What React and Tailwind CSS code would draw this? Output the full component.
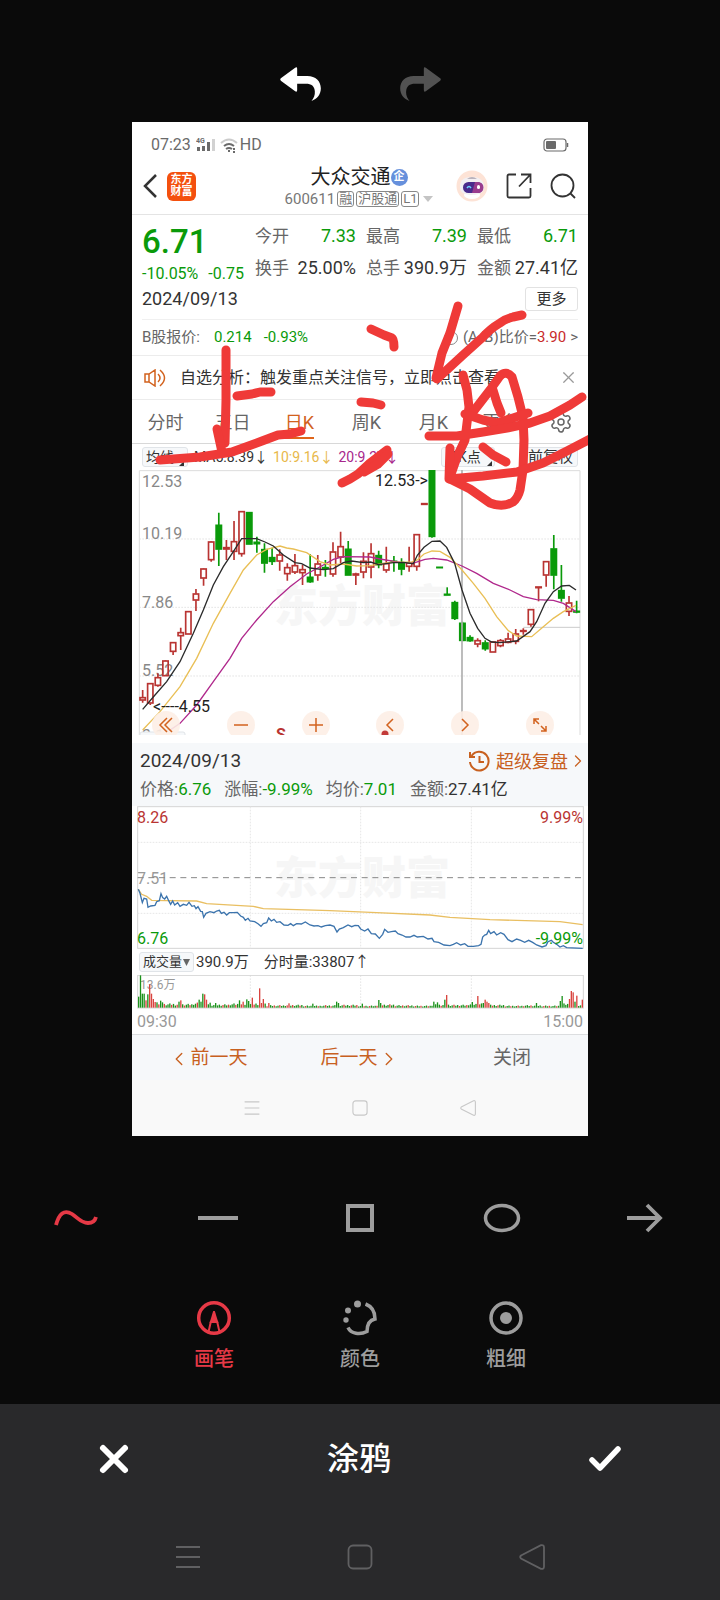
import React from 'react';
import { ChevronLeft, ChevronRight, Settings, X } from 'lucide-react';

const GREEN = '#0a9a0a';
const RED = '#b93432';

// [high, body top, body bottom, low, rising]
const candles = [
  [690, 712, 721, 728, 1], [670, 670, 730, 735, 1], [640, 652, 677, 680, 1], [600, 602, 648, 648, 1],
  [547, 547, 575, 585, 1], [503, 517, 528, 570, 1], [454, 454, 523, 523, 1], [387, 401, 421, 453, 1],
  [325, 326, 355, 377, 1], [244, 245, 300, 305, 1], [158, 195, 268, 318, 0], [240, 262, 268, 300, 1],
  [183, 244, 275, 300, 1], [154, 154, 282, 290, 1], [157, 157, 253, 253, 0], [230, 246, 252, 278, 0],
  [250, 268, 310, 338, 0], [263, 292, 305, 315, 0], [268, 284, 304, 332, 1], [310, 322, 342, 362, 1],
  [282, 316, 337, 342, 1], [315, 328, 339, 375, 1], [282, 351, 366, 368, 0], [285, 311, 346, 362, 1],
  [300, 322, 326, 350, 0], [247, 275, 343, 350, 1], [215, 259, 292, 310, 1], [243, 267, 346, 346, 0],
  [338, 341, 346, 375, 1], [277, 303, 337, 355, 1], [250, 280, 322, 355, 1], [272, 286, 315, 325, 0],
  [260, 310, 331, 338, 1], [288, 303, 307, 335, 0], [295, 310, 328, 346, 0], [260, 308, 320, 335, 1],
  [222, 223, 320, 332, 1], [130, 130, 134, 134, 1], [30, 30, 230, 233, 0], [321, 321, 324, 324, 0],
  [382, 402, 406, 406, 0], [422, 427, 476, 480, 0], [485, 489, 542, 544, 0], [526, 532, 543, 545, 0],
  [535, 541, 553, 562, 1], [541, 548, 567, 572, 0], [545, 545, 577, 577, 1], [537, 541, 558, 562, 1],
  [518, 536, 548, 550, 1], [507, 521, 545, 553, 1], [505, 511, 515, 524, 1], [448, 448, 494, 500, 1],
  [380, 380, 384, 424, 1], [303, 304, 346, 380, 1], [225, 266, 346, 388, 0], [315, 391, 415, 425, 0],
  [408, 428, 455, 468, 1], [422, 453, 457, 460, 0],
];

const ma5 =
  '38,748 75,705 110,665 150,605 190,520 220,450 250,375 280,320 310,275 335,236 380,236 405,246 430,258 460,285 495,308 515,311 540,324 580,329 610,326 640,308 665,303 700,308 722,306 745,314 790,308 820,307 850,311 862,286 882,262 906,244 930,243 950,262 974,310 996,390 1020,460 1043,505 1065,535 1085,546 1110,548 1160,543 1200,515 1220,485 1245,430 1270,395 1295,378 1318,376 1338,390';
const ma10 =
  '38,810 90,755 150,680 200,595 250,490 300,400 340,330 380,285 410,268 450,258 470,264 490,267 530,278 570,305 600,315 640,312 680,318 720,317 780,307 845,306 862,300 882,282 906,273 930,274 960,292 996,330 1030,370 1065,415 1100,470 1135,512 1160,528 1205,530 1240,500 1270,475 1300,455 1338,436';
const ma20 =
  '118,812 150,790 200,735 250,665 300,595 335,535 380,480 430,425 480,380 530,342 580,315 610,298 640,290 720,291 750,297 810,307 855,308 885,298 910,295 950,300 996,318 1040,340 1090,370 1140,390 1180,410 1220,419 1270,421 1300,430 1338,455';

const priceLine =
  '25,463 30,475 37,503 42,490 50,492 54,517 62,513 75,511 80,500 88,497 93,476 98,488 104,492 110,484 116,497 122,508 128,498 134,510 143,503 150,514 160,508 170,511 177,502 186,514 193,512 198,521 204,515 212,529 217,530 221,547 228,535 240,530 252,533 260,528 268,526 274,535 282,532 290,540 298,533 310,533 322,532 332,543 340,547 346,556 354,550 360,558 374,560 384,566 393,574 400,566 410,563 416,549 424,558 432,553 440,562 450,560 462,570 474,571 482,566 490,572 500,566 514,567 526,561 540,570 552,573 564,572 574,576 586,572 600,570 612,574 621,591 628,582 640,578 654,570 665,575 675,571 685,572 692,582 704,588 714,582 724,596 736,597 748,610 758,598 764,583 774,592 784,590 796,588 804,596 816,600 828,606 840,606 852,601 862,606 880,604 894,612 906,610 912,620 926,622 942,630 960,632 970,628 980,623 992,630 1004,626 1014,634 1030,634 1046,632 1053,628 1058,606 1064,600 1070,598 1076,586 1082,596 1092,590 1100,600 1112,593 1122,598 1134,614 1146,620 1160,612 1172,616 1184,622 1196,616 1208,622 1220,630 1236,636 1248,632 1254,620 1264,616 1270,622 1280,628 1290,636 1300,632 1310,638 1358,640';
const averageLine =
  '25,463 35,478 50,484 65,496 200,498 230,506 370,514 400,521 600,527 740,533 900,540 960,547 1080,554 1290,560 1358,569';

// [x, height, rising] of the taller volume bars
const volumePeaks = [
  [26, 33, 0], [31, 97, 0], [37, 42, 0], [42, 42, 0], [48, 22, 1], [54, 40, 0], [59, 70, 1], [65, 42, 1],
  [70, 26, 1], [76, 17, 1], [82, 16, 0], [93, 21, 0], [98, 16, 0], [148, 18, 0], [153, 22, 1], [208, 24, 0],
  [214, 18, 0], [220, 42, 0], [226, 40, 1], [231, 24, 1], [242, 15, 0], [259, 14, 0], [331, 22, 0],
  [337, 18, 1], [348, 25, 0], [354, 20, 0], [365, 30, 1], [387, 58, 1], [398, 26, 1], [415, 14, 1],
  [476, 13, 1], [548, 12, 0], [620, 18, 0], [626, 14, 0], [698, 12, 0], [748, 23, 0], [754, 14, 0],
  [914, 18, 0], [920, 16, 0], [942, 24, 0], [948, 38, 1], [1025, 17, 0], [1042, 35, 1], [1058, 14, 0],
  [1064, 24, 1], [1070, 18, 1], [1076, 14, 1], [1219, 14, 0], [1292, 20, 0], [1297, 35, 0], [1319, 26, 1],
  [1325, 50, 1], [1330, 46, 1], [1336, 18, 0], [1342, 36, 1], [1358, 24, 1],
];
const volumeBase = [16, 10, 9, 12, 8, 10, 11, 6, 7, 5, 6, 7, 5, 8, 6, 5, 8, 7, 10, 7, 5, 6, 5, 10, 7];
const volumes = Array.from({ length: 243 }, (_, i) => {
  const x = 26 + i * 5.5;
  const peak = volumePeaks.find((p) => Math.abs(p[0] - x) < 2.8);
  if (peak) return { x, h: peak[1], up: peak[2] };
  const base = volumeBase[Math.floor(i / 10)] || 5;
  return { x, h: base * (0.7 + ((i * 7) % 5) / 7), up: (i * i + i * 3) % 7 < 3 };
});

const quotes = [
  ['今开', '7.33', true], ['最高', '7.39', true], ['最低', '6.71', true],
  ['换手', '25.00%', false], ['总手', '390.9万', false], ['金额', '27.41亿', false],
];

const doodle = [
  'M226 350V400L225 443',
  'M217 429L222 452',
  'M160 460L200 457L232 452L262 441L278 435L290 434L301 431',
  'M237 396L252 394L260 392L271 392',
  'M371 329L384 335L392 338Q394 339 394 347',
  'M361 402L373 403L381 405',
  'M387 450L370 463L358 474L350 479L342 483',
  'M388 454L378 464L364 472',
  'M458 306L450 333L442 353L436 378',
  'M522 315L513 317Q505 319 500 323Q490 329 483 337L463 355L437 379',
  'M463 375L467 390L469 407L467 423L465 440L457 457L450 477',
  'M473 412L490 390L500 376Q506 370 512 377L518 397L523 417L524 440L523 470L520 490Q518 498 513 502Q503 508 490 503L470 489L450 479',
  'M465 414L483 420L497 423L513 418L528 413',
  'M493 390L497 403L501 413',
  'M429 436H457L483 432L507 428L530 423L550 416L570 405L582 397',
  'M483 447L493 455L506 462',
  'M450 448L449 479L483 476L517 472L543 463L567 451L592 438',
];

const ArrowBack = () => (
  <svg viewBox="446 48 128 108" className="h-9 w-[43px] fill-current">
    <path d="M451 85L494 53Q500 49 500 56V78H530C556 78 571 94 571 115C571 134 560 147 543 153C550 144 554 136 553 124C552 108 543 101 526 101H500V120Q500 128 494 124L451 92Q447 88 451 85Z" />
  </svg>
);

const StatusBar = () => (
  <div className="flex h-[46px] items-center px-[19px] text-base text-[#6a6a6a]">
    <span>07:23</span>
    <svg viewBox="0 0 20 16" className="ml-[5px] h-4 w-5">
      <text x="0" y="6" fontSize="7" fontWeight="700" fill="#6a6a6a">4G</text>
      <g fill="#6a6a6a">
        <path d="M1 10h3v4H1zM6 9h3v5H6zM11 5h3v9h-3z" />
        <path d="M16 2h3v12h-3z" opacity=".3" />
      </g>
    </svg>
    <svg viewBox="0 0 18 15" className="ml-1 h-[15px] w-[18px]" fill="none" stroke="#6a6a6a" strokeWidth="2">
      <path d="M1 5Q9-2 17 5" opacity=".35" />
      <path d="M4 8q5-4 10 0M6 11q3-2 6 0" />
      <path d="M8 13h2M13 11h2M13 14h2" />
    </svg>
    <span className="ml-[2px]">HD</span>
    <svg viewBox="0 0 26 14" className="ml-auto h-[14px] w-[26px]">
      <rect x="1" y="1" width="22" height="12" rx="3" fill="none" stroke="#6a6a6a" strokeWidth="1.200" />
      <rect x="3" y="3" width="10" height="8" rx="1" fill="#6a6a6a" />
      <path d="M24.500 5v4" stroke="#6a6a6a" strokeWidth="1.500" />
    </svg>
  </div>
);

const Tag = ({ children }) => (
  <span className="rounded-[3px] border border-[#888] px-px leading-[14px]">{children}</span>
);

const StockHeader = () => (
  <header className="flex h-[47px] items-center border-b border-[#e4e4e4] pb-[10px] pl-[10px] pr-3">
    <div className="flex flex-1 items-center gap-[9px]">
      <button aria-label="返回">
        <svg viewBox="0 0 16 24" className="h-6 w-4" fill="none" stroke="#333" strokeWidth="2.500">
          <path d="M14 1L3 12l11 11" />
        </svg>
      </button>
      <span className="flex size-[29px] flex-col items-center justify-center rounded-md bg-[#f4500e] text-[11px] font-bold leading-[12px] text-white">
        <span>东方</span>
        <span>财富</span>
      </span>
    </div>
    <div className="flex flex-col items-center">
      <h1 className="flex items-center text-[20px] leading-[24px] text-[#222]">
        大众交通
        <span className="flex size-[17px] items-center justify-center rounded-full bg-[#6690dc] text-[11px] font-bold text-white">企</span>
      </h1>
      <div className="mt-[2px] flex items-center gap-[2px] text-[13px] leading-4 text-[#777]">
        <span className="text-[15px]">600611</span>
        <Tag>融</Tag>
        <Tag>沪股通</Tag>
        <Tag>L1</Tag>
        <svg viewBox="0 0 10 6" className="ml-[2px] h-[6px] w-[10px]"><path d="M0 0h10L5 6z" fill="#c4c4c4" /></svg>
      </div>
    </div>
    <div className="flex flex-1 items-center justify-end gap-[18px]">
      <button aria-label="智能助手">
        <svg viewBox="0 0 32 32" className="size-8">
          <circle cx="16" cy="16" r="15.500" fill="#fde3d6" />
          <ellipse cx="16" cy="25" rx="8" ry="4" fill="#fff" />
          <path d="M4 17C4 9 9 7 16 7s12 3 12 10c0 6-5 8-12 8S4 23 4 17z" fill="#f2eff2" />
          <path d="M11 9q5-4 10 0z" fill="#b9b2bb" />
          <rect x="7" y="12" width="20" height="11" rx="5.500" fill="#4a2b8c" />
          <path d="M19 12h3a5 5 0 0 1 0 11h-6z" fill="#9a3c8e" />
          <path d="M11 18q2-3 4 0" fill="none" stroke="#6fd6ff" strokeWidth="1.500" />
          <rect x="21" y="15" width="3" height="4" rx="1.500" fill="#fff" />
        </svg>
      </button>
      <button aria-label="分享">
        <svg viewBox="0 0 26 26" className="size-[26px]" fill="none" stroke="#333" strokeWidth="1.800">
          <path d="M10 1.500H3Q1.500 1.500 1.500 3v20q0 1.500 1.500 1.500h20q1.500 0 1.500-1.500v-8M15 1.500h9.500V10M24 2L13 13.500" />
        </svg>
      </button>
      <button aria-label="搜索">
        <svg viewBox="0 0 26 26" className="size-[26px]" fill="none" stroke="#333" strokeWidth="1.800">
          <circle cx="12.500" cy="12.500" r="11" />
          <path d="M20 20l5 5" />
        </svg>
      </button>
    </div>
  </header>
);

const QuotePanel = () => (
  <section className="border-b border-[#ececec]">
    <div className="mx-[10px] border-b border-[#f0f0f0] pb-2 pt-[5px]">
      <div className="flex justify-between">
        <div className="text-[#0a9a0a]">
          <div className="text-[33px] font-medium leading-[44px]">6.71</div>
          <div className="flex gap-[10px] text-base leading-5">
            <span>-10.05%</span>
            <span>-0.75</span>
          </div>
        </div>
        <dl className="grid grid-cols-[101px_101px_101px] gap-x-[10px] text-[17px] leading-8">
          {quotes.map(([label, value, down]) => (
            <div key={label} className="flex justify-between whitespace-nowrap">
              <dt className="text-[#666]">{label}</dt>
              <dd className={down ? 'text-[18px] text-[#0a9a0a]' : 'text-[18px] text-[#333]'}>{value}</dd>
            </div>
          ))}
        </dl>
      </div>
      <div className="flex items-center justify-between pt-[3px]">
        <span className="text-[18px] leading-6 text-[#333]">2024/09/13</span>
        <button className="h-6 w-[53px] rounded-[3px] border border-[#e2e2e2] text-[15px] leading-5 text-[#333]">更多</button>
      </div>
    </div>
    <div className="flex h-[35px] items-center px-[10px] text-[15px] text-[#666]">
      <span>B股报价:</span>
      <span className="ml-[14px] text-[#0a9a0a]">0.214</span>
      <span className="ml-3 text-[#0a9a0a]">-0.93%</span>
      <a href="#ratio" className="ml-auto flex items-center">
        <span className="mr-[5px] flex size-[14px] items-center justify-center rounded-full border border-[#888] text-[10px]">?</span>
        (A/B)比价=<span className="mr-1 text-[#c82a2a]">3.90</span> &gt;
      </a>
    </div>
  </section>
);

const Notice = () => (
  <div className="flex h-11 items-center border-b border-[#ececec] pl-3 pr-[10px] text-base text-[#333]">
    <svg viewBox="0 0 22 18" className="h-[18px] w-[22px] shrink-0" fill="none" stroke="#d2621e" strokeWidth="1.500">
      <path d="M1 5v8h4l6 4V1L5 5zM5 5v8M14 5q4 4 0 8M16 1q9 8 0 16" />
    </svg>
    <span className="ml-[14px] whitespace-nowrap">自选分析：触发重点关注信号，立即点击查看</span>
    <button aria-label="关闭提示" className="ml-auto text-[#999]">
      <X size={19} strokeWidth={1.5} />
    </button>
  </div>
);

const Tabs = () => (
  <nav className="flex h-11 items-center border-b border-[#d8d8d8] text-[18px] leading-7 text-[#666]">
    {['分时', '五日', '日K', '周K', '月K', '更多'].map((tab) => (
      <button key={tab} className="flex h-full flex-1 flex-col items-center justify-end pb-1">
        {tab === '日K' ? (
          <span className="border-b-2 border-[#e0651a] text-[#d2621e]">{tab}</span>
        ) : (
          <span className="border-b-2 border-transparent">{tab}</span>
        )}
      </button>
    ))}
    <button aria-label="设置" className="flex w-[54px] justify-center">
      <Settings size={24} strokeWidth={1.5} />
    </button>
  </nav>
);

const Corner = () => (
  <svg viewBox="0 0 5 5" className="size-[5px] shrink-0"><path d="M5 0v5H0z" fill="#333" /></svg>
);

const Indicators = () => (
  <div className="flex h-[26px] items-center whitespace-nowrap px-[10px] text-[14px] leading-[18px]">
    <button className="flex w-[46px] items-end justify-between rounded-[3px] border border-[#e0e4e8] bg-[#f6f8fa] px-[3px] text-[#333]">
      均线<Corner />
    </button>
    <span className="ml-[6px] text-[#333]">MA5:8.39↓</span>
    <span className="ml-[5px] text-[#e8b84a]">10:9.16↓</span>
    <span className="ml-[5px] text-[#a8268c]">20:9.27↓</span>
    <button className="ml-auto flex w-[54px] items-end justify-between rounded-[3px] border border-[#e0e4e8] bg-[#f6f8fa] px-[2px] text-[#333]">
      【K点<Corner />
    </button>
    <button className="ml-7 rounded-[3px] border border-[#e0e4e8] bg-[#f6f8fa] px-1 text-[15px] text-[#333]">前复权</button>
  </div>
);

const chartTools = [
  ['最早', 'M11 3L4 10l7 7M16 3l-7 7 7 7'],
  ['缩小', 'M3 10h14'],
  ['放大', 'M3 10h14M10 3v14'],
  ['左移', 'M13 4l-6 6 6 6'],
  ['右移', 'M7 4l6 6-6 6'],
  ['全屏', 'M4 9V4h5M4 4l5 5M16 11v5h-5M16 16l-5-5'],
];

const KLineChart = () => (
  <div className="relative overflow-hidden">
    <svg viewBox="0 0 456 265" className="block w-full" fontSize="16">
      <text x="230" y="152" textAnchor="middle" fontSize="44" fontWeight="900" fill="#f6f6f6">东方财富</text>
      <g transform="scale(.33333) translate(-6 -30)" fill="none" strokeWidth="3">
        <path d="M28 830V32H1350V830" stroke="#dcdcdc" />
        <path d="M28 237H1350M28 442H1350M28 648H1350" stroke="#e4e4e4" strokeDasharray="5 4" />
        <path d="M1180 502H1350" stroke="#ccc" />
      </g>
      <g fill="#888">
        <text x="10" y="17">12.53</text>
        <text x="10" y="69">10.19</text>
        <text x="10" y="138">7.86</text>
        <text x="10" y="206">5.52</text>
        <text x="10" y="271">3.18</text>
      </g>
      <rect x="8" y="262" width="45" height="8" rx="2" fill="#f6f8fa" stroke="#e0e4e8" />
      <g transform="scale(.33333) translate(-6 -30)" fill="none" strokeWidth="5">
        {candles.map(([high, top, bottom, low, up], i) => {
          const x = 38 + i * 22.84;
          const color = up ? RED : GREEN;
          return (
            <g key={i} stroke={color}>
              <path d={`M${x} ${high}V${top}M${x} ${bottom}V${low}`} />
              <rect
                x={x - 8}
                y={top + 1}
                width="16"
                height={Math.max(bottom - top - 2, 1)}
                fill={up ? 'none' : color}
              />
            </g>
          );
        })}
        <path d="M996 30V830" stroke="#b0b0b0" />
        <g strokeWidth="4">
          <polyline points={ma20} stroke="#b0288c" />
          <polyline points={ma10} stroke="#e9bf55" />
          <polyline points={ma5} stroke="#2b2b2b" />
        </g>
      </g>
      <g fill="#222">
        <text x="21" y="242">&lt;----4.55</text>
        <text x="243" y="16">12.53-&gt;</text>
      </g>
      <text x="144" y="270" fontWeight="700" fill={RED}>S</text>
    </svg>
    <div className="absolute -bottom-1 left-5 right-[34px] flex justify-between">
      {chartTools.map(([label, d]) => (
        <button key={label} aria-label={label} className="flex size-7 items-center justify-center rounded-full bg-[#fdeee5]/90">
          <svg viewBox="0 0 20 20" className="size-5" fill="none" stroke="#d2621e" strokeWidth="1.500">
            <path d={d} />
            {label === '左移' && <circle cx="5" cy="19" r="3.500" fill="#c23a38" stroke="none" />}
          </svg>
        </button>
      ))}
    </div>
  </div>
);

const Replay = () => (
  <section className="mt-2 bg-[#f6f8fa] pb-1 pl-2 pr-[6px] pt-[6px]">
    <div className="flex h-6 items-center justify-between">
      <span className="text-[19px] text-[#333]">2024/09/13</span>
      <a href="#replay" className="flex items-center text-[18px] text-[#c8601f]">
        <svg viewBox="0 0 22 22" className="mr-[6px] size-[22px]" fill="none" stroke="#c8601f" strokeWidth="2">
          <path d="M3.500 6A9.300 9.300 0 1 1 2 12M2 2v5h5M11.500 6v6H16" />
        </svg>
        超级复盘
        <ChevronRight size={20} strokeWidth={1.5} className="-mr-[6px]" />
      </a>
    </div>
    <div className="mt-[5px] flex h-6 items-center gap-[13px] whitespace-nowrap text-[17px] text-[#666]">
      <span>价格:<span className="text-[#0a9a0a]">6.76</span></span>
      <span>涨幅:<span className="text-[#0a9a0a]">-9.99%</span></span>
      <span>均价:<span className="text-[#0a9a0a]">7.01</span></span>
      <span>金额:<span className="text-[#333]">27.41亿</span></span>
    </div>
  </section>
);

const MinuteChart = () => (
  <svg viewBox="0 0 456 143" className="block w-full" fontSize="16">
    <text x="230" y="88" textAnchor="middle" fontSize="44" fontWeight="900" fill="#f6f6f6">东方财富</text>
    <text x="5" y="78" fill="#999">7.51</text>
    <g transform="scale(.33333) translate(-6 -213)" fill="none" strokeWidth="3">
      <rect x="23" y="215" width="1337" height="425" stroke="#d4d4d4" />
      <path d="M23 322H1360M23 535H1360M361 215V640M692 215V640M1024 215V640" stroke="#e6e6e6" strokeDasharray="5 4" />
      <path d="M23 428H1360" stroke="#888" strokeDasharray="18 14" />
      <polyline points={averageLine} stroke="#e9bf62" strokeWidth="4" />
      <polyline points={priceLine} stroke="#3c74ad" strokeWidth="4" />
    </g>
    <text x="5" y="17" fill={RED}>8.26</text>
    <text x="451" y="17" textAnchor="end" fill={RED}>9.99%</text>
    <text x="5" y="138" fill={GREEN}>6.76</text>
    <text x="451" y="138" textAnchor="end" fill={GREEN}>-9.99%</text>
  </svg>
);

const Volume = () => (
  <section>
    <div className="flex h-[26px] items-center pl-[7px] text-[15px] text-[#333]">
      <button className="flex h-5 w-[55px] items-center justify-between rounded-[3px] border border-[#e0e4e8] bg-[#f6f8fa] px-[3px] text-[13px]">
        成交量
        <svg viewBox="0 0 6 6" className="size-[7px]"><path d="M0 0h6L3 6z" fill="#666" /></svg>
      </button>
      <span className="ml-[2px]">390.9万</span>
      <span className="ml-[15px]">分时量:33807↑</span>
    </div>
    <svg viewBox="0 0 456 34" className="block w-full" fontSize="12">
      <text x="8" y="14" fill="#999">13.6万</text>
      <g transform="scale(.33333) translate(-6 -106)">
        <path d="M361 107V205M692 107V205M1024 107V205" stroke="#e6e6e6" strokeWidth="3" strokeDasharray="5 4" />
        <rect x="23" y="107" width="1337" height="98" fill="none" stroke="#d4d4d4" strokeWidth="3" />
        {volumes.map(({ x, h, up }) => (
          <rect key={x} x={x - 2} y={204 - h} width="4" height={h} fill={up ? '#d9443f' : '#1c921c'} />
        ))}
      </g>
    </svg>
    <div className="flex h-[25px] items-center justify-between px-[5px] text-base text-[#999]">
      <span>09:30</span>
      <span>15:00</span>
    </div>
  </section>
);

const DayNav = () => (
  <nav className="flex h-[46px] items-center border-t border-[#dcdee0] bg-[#f6f8fa] pt-[2px] text-[19px] text-[#c8601f]">
    <button className="flex flex-1 items-center justify-center">
      <ChevronLeft size={22} strokeWidth={1.5} />前一天
    </button>
    <button className="flex flex-1 items-center justify-center">
      后一天<ChevronRight size={22} strokeWidth={1.5} />
    </button>
    <button className="flex-1 text-center text-[#666]">关闭</button>
  </nav>
);

const NavIcons = ({ className }) => (
  <>
    <button aria-label="菜单">
      <svg viewBox="0 0 26 26" className={className} fill="none" stroke="currentColor" strokeWidth="1.800">
        <path d="M1 3h24M1 13h24M1 23h24" />
      </svg>
    </button>
    <button aria-label="主屏幕">
      <svg viewBox="0 0 26 26" className={className} fill="none" stroke="currentColor" strokeWidth="1.800">
        <rect x="1.500" y="1.500" width="23" height="23" rx="4.500" />
      </svg>
    </button>
    <button aria-label="后退">
      <svg viewBox="0 0 26 26" className={className} fill="none" stroke="currentColor" strokeWidth="1.800">
        <path d="M2 11.500L22 1.200Q25 .5 25 3.500v19q0 3-3 2.300L2 14.500Q.5 13 2 11.500z" />
      </svg>
    </button>
  </>
);

const Shot = () => (
  <div className="relative mx-auto w-full max-w-[456px] overflow-hidden bg-white">
    <StatusBar />
    <StockHeader />
    <QuotePanel />
    <Notice />
    <Tabs />
    <Indicators />
    <KLineChart />
    <Replay />
    <MinuteChart />
    <Volume />
    <DayNav />
    <div className="flex h-14 items-center justify-center gap-[92px] bg-[#f9f9f9] text-[#c8c8c8]">
      <NavIcons className="size-4" />
    </div>
    <svg viewBox="132 122 456 1013" className="pointer-events-none absolute left-0 top-0 w-full">
      <g fill="none" stroke="#ef3a38" strokeWidth="9" strokeLinecap="round" strokeLinejoin="round">
        {doodle.map((d) => <path key={d} d={d} />)}
      </g>
    </svg>
  </div>
);

const ShapeTools = () => (
  <div className="flex justify-between px-[52px] text-[#9d9d9d]">
    <button aria-label="曲线" className="text-[#e63946]">
      <svg viewBox="0 0 46 32" className="h-8 w-[46px]" fill="none" stroke="currentColor" strokeWidth="3.800">
        <path d="M4 23C7 12 12 7 20 12c6 4 9 9 16 9 4 0 7-2 8-6" />
      </svg>
    </button>
    <button aria-label="直线">
      <svg viewBox="0 0 46 32" className="h-8 w-[46px]" fill="none" stroke="currentColor" strokeWidth="4">
        <path d="M3 16h40" />
      </svg>
    </button>
    <button aria-label="矩形">
      <svg viewBox="0 0 46 32" className="h-8 w-[46px]" fill="none" stroke="currentColor" strokeWidth="4">
        <path d="M11 4h24v24H11z" />
      </svg>
    </button>
    <button aria-label="椭圆">
      <svg viewBox="0 0 46 32" className="h-8 w-[46px]" fill="none" stroke="currentColor" strokeWidth="3.500">
        <ellipse cx="22" cy="16" rx="16.500" ry="12.500" />
      </svg>
    </button>
    <button aria-label="箭头">
      <svg viewBox="0 0 46 32" className="h-8 w-[46px]" fill="none" stroke="currentColor" strokeWidth="3.800">
        <path d="M5 16h32M25 3l13 13-13 13" />
      </svg>
    </button>
  </div>
);

const BrushTools = () => (
  <div className="flex justify-center gap-[106px] text-[20px] font-medium leading-7 text-[#9d9d9d]">
    <button className="flex flex-col items-center gap-[9px] text-[#e63946]">
      <svg viewBox="0 0 36 36" className="size-9" fill="none" stroke="currentColor" strokeWidth="3.500">
        <circle cx="18" cy="18" r="15.300" />
        <path d="M15 21L12.500 32M21 21L23.500 32" strokeWidth="2" />
        <path d="M17.200 11h1.600L22.500 23h-9z" fill="currentColor" stroke="none" />
      </svg>
      画笔
    </button>
    <button className="flex flex-col items-center gap-[9px]">
      <svg viewBox="0 0 36 36" className="size-9" fill="none" stroke="currentColor" strokeWidth="3.500">
        <path d="M23.500 4C30 6.500 33 12 33 19c-5 1-8 4-8 12.500C18 35 9 34 6 27.500" />
        <g fill="currentColor" stroke="none">
          <circle cx="15.500" cy="4" r="3.500" />
          <circle cx="6" cy="10.500" r="3" />
          <circle cx="4" cy="20" r="2.700" />
        </g>
      </svg>
      颜色
    </button>
    <button className="flex flex-col items-center gap-[9px]">
      <svg viewBox="0 0 36 36" className="size-9" fill="none" stroke="currentColor" strokeWidth="3.500">
        <circle cx="18" cy="18" r="15" />
        <circle cx="18" cy="18" r="6" fill="currentColor" stroke="none" />
      </svg>
      粗细
    </button>
  </div>
);

const App = () => (
  <div className="flex min-h-screen flex-col bg-[#0a0a0a] font-[Roboto,'Noto_Sans_CJK_SC',sans-serif]">
    <div className="flex justify-center gap-[77px] pb-5 pt-[66px]">
      <button aria-label="撤销" className="text-white"><ArrowBack /></button>
      <button aria-label="重做" className="-scale-x-100 text-[#525252]"><ArrowBack /></button>
    </div>
    <Shot />
    <div className="mb-[31px] mt-[66px] flex flex-col gap-[66px]">
      <ShapeTools />
      <BrushTools />
    </div>
    <footer className="mt-auto bg-[#29292b] pb-[30px] pt-[31px]">
      <div className="flex items-center justify-between px-[98px] text-white">
        <button aria-label="取消">
          <svg viewBox="0 0 32 32" className="size-8" stroke="currentColor" strokeWidth="6" strokeLinecap="round">
            <path d="M5 5l22 22M27 5L5 27" />
          </svg>
        </button>
        <h2 className="text-[32px] font-medium leading-[48px]">涂鸦</h2>
        <button aria-label="完成">
          <svg viewBox="0 0 34 32" className="h-8 w-[34px]" fill="none" stroke="currentColor" strokeWidth="5.500" strokeLinecap="round" strokeLinejoin="round">
            <path d="M4 17l8 8L30 6" />
          </svg>
        </button>
      </div>
      <div className="mt-[61px] flex items-center justify-center gap-[146px] text-[#606062]">
        <NavIcons className="size-[26px]" />
      </div>
    </footer>
  </div>
);

export default App;
